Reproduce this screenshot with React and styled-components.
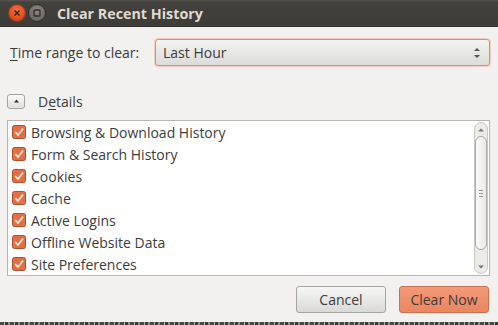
import React from "react";
import styled, { createGlobalStyle } from "styled-components";

const Global = createGlobalStyle`
  html, body { margin: 0; padding: 0; background: #f2f1f0; }
  body { font-family: "Open Sans", "DejaVu Sans", sans-serif; }
`;

const Window = styled.div`
  width: 498px;
  height: 325px;
  display: flex;
  flex-direction: column;
  background: #f2f1f0;
  color: #3c3c3c;
  overflow: hidden;
  font-size: 14px;
`;

const TitleBar = styled.div`
  height: 27px;
  flex: none;
  display: flex;
  align-items: center;
  padding-left: 8px;
  gap: 2px;
  background: linear-gradient(#57554f 0px, #44423d 2px, #3d3c38 100%);
  border-bottom: 1px solid #2d2c29;
  box-sizing: border-box;
`;

const WinButton = styled.div`
  width: 18px;
  height: 18px;
  border-radius: 50%;
  display: flex;
  align-items: center;
  justify-content: center;
  box-sizing: border-box;
  border: 1px solid ${(p) => (p.$close ? "#8f3a1c" : "#2f2e2b")};
  background: ${(p) =>
    p.$close
      ? "radial-gradient(circle at 50% 35%, #f2754b, #dd4814 70%, #c53f12)"
      : "radial-gradient(circle at 50% 35%, #8a8882, #6b6a65 70%, #5c5b57)"};
`;

const Title = styled.div`
  margin-left: 9px;
  font-weight: bold;
  font-size: 14.3px;
  color: #dfdbd2;
`;

const Body = styled.div`
  flex: 1;
  display: flex;
  flex-direction: column;
  padding: 12px 8px 0 7px;
`;

const RangeRow = styled.div`
  display: flex;
  align-items: center;
  height: 27px;
`;

const Label = styled.div`
  width: 148px;
  box-sizing: border-box;
  padding-left: 3px;
  white-space: nowrap;
`;

const Select = styled.div`
  flex: 1;
  height: 27px;
  box-sizing: border-box;
  border: 1px solid #ec8a63;
  box-shadow: 0 0 0 1px rgba(240, 140, 100, 0.35);
  border-radius: 3px;
  background: linear-gradient(#f3f3f2, #dcdcda);
  display: flex;
  align-items: center;
  justify-content: space-between;
  padding: 0 8px 0 7px;
`;

const DetailsRow = styled.div`
  margin-top: 27px;
  display: flex;
  align-items: center;
  height: 16px;
  gap: 13px;
`;

const Expander = styled.div`
  width: 18px;
  height: 15px;
  box-sizing: border-box;
  border: 1px solid #a3a3a0;
  border-radius: 3px;
  background: linear-gradient(#fbfbfb, #dededc);
  display: flex;
  align-items: center;
  justify-content: center;
`;

const List = styled.div`
  margin-top: 11px;
  height: 156px;
  box-sizing: border-box;
  border: 1px solid #b6b6b3;
  background: #fff;
  display: flex;
`;

const Items = styled.div`
  flex: 1;
  display: flex;
  flex-direction: column;
`;

const Item = styled.div`
  height: 22px;
  display: flex;
  align-items: center;
  gap: 5px;
  padding-left: 4px;
`;

const Scroll = styled.div`
  width: 14px;
  margin: 1px 1px 1px 0;
  box-sizing: border-box;
  border: 1px solid #c9c9c6;
  border-radius: 7px;
  background: #ebebea;
  display: flex;
  flex-direction: column;
  align-items: center;
`;

const ScrollArrow = styled.div`
  height: 13px;
  display: flex;
  align-items: center;
  justify-content: center;
  flex: none;
`;

const Thumb = styled.div`
  width: 12px;
  height: 114px;
  box-sizing: border-box;
  border: 1px solid #a9a9a6;
  border-radius: 6px;
  background: linear-gradient(90deg, #fafafa, #e9e9e8);
  display: flex;
  align-items: center;
  justify-content: center;
`;

const Buttons = styled.div`
  margin-top: 10px;
  display: flex;
  justify-content: flex-end;
  gap: 13px;
  padding-right: 1px;
`;

const Button = styled.div`
  width: ${(p) => p.$w}px;
  height: 27px;
  box-sizing: border-box;
  border-radius: 3px;
  display: flex;
  align-items: center;
  justify-content: center;
  border: 1px solid ${(p) => (p.$primary ? "#c9714f" : "#a5a5a2")};
  background: ${(p) =>
    p.$primary
      ? "linear-gradient(#f29a79, #ec8560)"
      : "linear-gradient(#f7f7f6, #d9d9d7)"};
  color: #3c3c3c;
`;

const Strip = styled.div`
  margin-top: auto;
  height: 3px;
  background: repeating-linear-gradient(90deg, #4a4a48 0 4px, #b0b0ac 4px 5px, #3a3a38 5px 8px, #8d8d8a 8px 10px);
`;

const U = styled.span`
  text-decoration: underline;
  text-underline-offset: 2px;
`;

const CheckBox = () => (
  <svg width="14" height="14" viewBox="0 0 14 14">
    <rect x="0.5" y="0.5" width="13" height="13" rx="2" fill="#e46f43" stroke="#a9502f" />
    <path d="M3.2 7.2 L6 10 L11 3.6" fill="none" stroke="#f6e2d8" strokeWidth="1.8" />
  </svg>
);

const items = [
  "Browsing & Download History",
  "Form & Search History",
  "Cookies",
  "Cache",
  "Active Logins",
  "Offline Website Data",
  "Site Preferences",
];

export default function App() {
  return (
    <Window>
      <Global />
      <TitleBar>
        <WinButton $close>
          <svg width="8" height="8" viewBox="0 0 8 8">
            <path d="M1.5 1.5 L6.5 6.5 M6.5 1.5 L1.5 6.5" stroke="#3a1a0e" strokeWidth="1.4" />
          </svg>
        </WinButton>
        <WinButton>
          <svg width="8" height="8" viewBox="0 0 8 8">
            <rect x="1" y="1" width="6" height="6" rx="1" fill="none" stroke="#2e2d2a" strokeWidth="1.3" />
          </svg>
        </WinButton>
        <Title>Clear Recent History</Title>
      </TitleBar>
      <Body>
        <RangeRow>
          <Label>
            <U>T</U>ime range to clear:
          </Label>
          <Select>
            <span>Last Hour</span>
            <svg width="8" height="14" viewBox="0 0 8 14">
              <path d="M1 5 L4 2 L7 5 Z M1 9 L4 12 L7 9 Z" fill="#555" />
            </svg>
          </Select>
        </RangeRow>
        <DetailsRow>
          <Expander>
            <svg width="5" height="4" viewBox="0 0 5 4">
              <path d="M0 3.5 L2.5 0.5 L5 3.5 Z" fill="#333" />
            </svg>
          </Expander>
          <span>
            D<U>e</U>tails
          </span>
        </DetailsRow>
        <List>
          <Items>
            {items.map((t) => (
              <Item key={t}>
                <CheckBox />
                <span>{t}</span>
              </Item>
            ))}
          </Items>
          <Scroll>
            <ScrollArrow>
              <svg width="6" height="4" viewBox="0 0 6 4">
                <path d="M0 3.5 L3 0.5 L6 3.5 Z" fill="#777" />
              </svg>
            </ScrollArrow>
            <Thumb>
              <svg width="4" height="7" viewBox="0 0 4 7">
                <path d="M0 0.5 H4 M0 3.5 H4 M0 6.5 H4" stroke="#999" />
              </svg>
            </Thumb>
            <div style={{ flex: 1 }} />
            <ScrollArrow>
              <svg width="6" height="4" viewBox="0 0 6 4">
                <path d="M0 0.5 L3 3.5 L6 0.5 Z" fill="#777" />
              </svg>
            </ScrollArrow>
          </Scroll>
        </List>
        <Buttons>
          <Button $w={90}>Cancel</Button>
          <Button $w={90} $primary>Clear Now</Button>
        </Buttons>
      </Body>
      <Strip />
    </Window>
  );
}
